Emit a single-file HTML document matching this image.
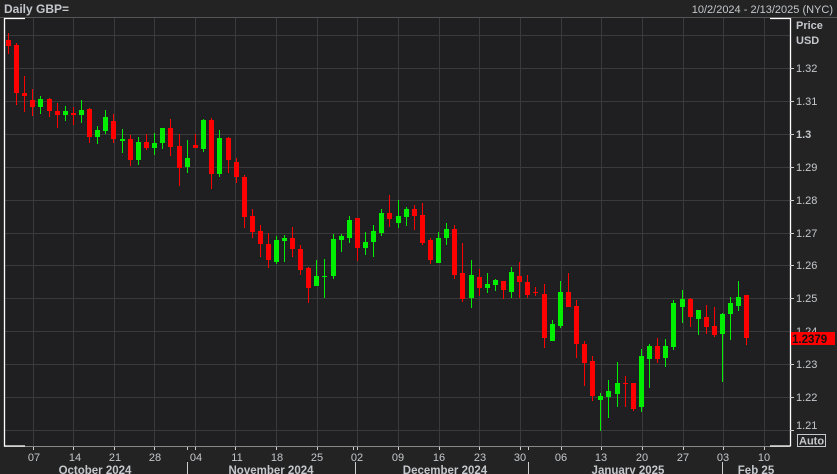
<!DOCTYPE html>
<html><head><meta charset="utf-8"><style>
html,body{margin:0;padding:0;background:#222222;width:837px;height:474px;overflow:hidden}
svg{display:block;font-family:"Liberation Sans",Tahoma,sans-serif}
</style></head><body>
<svg width="837" height="474" viewBox="0 0 837 474" xmlns="http://www.w3.org/2000/svg">
<rect x="0" y="0" width="837" height="474" fill="#232323"/>
<rect x="4" y="18" width="786" height="428" fill="#1f1f21"/>
<line x1="0" y1="17.5" x2="837" y2="17.5" stroke="#555" stroke-width="1"/>
<text x="4" y="13" font-size="12" font-weight="bold" fill="#c4c8cc">Daily GBP=</text>
<text x="833" y="13" font-size="11" fill="#c4c8cc" text-anchor="end">10/2/2024 - 2/13/2025 (NYC)</text>
<g stroke="#3a3a3a" stroke-width="1">
<path d="M5 35.5H790M5 68.5H790M5 101.5H790M5 134.5H790M5 167.5H790M5 200.5H790M5 233.5H790M5 265.5H790M5 298.5H790M5 331.5H790M5 364.5H790M5 397.5H790M5 430.5H790"/>
<path d="M33.5 18V446M73.5 18V446M114.5 18V446M154.5 18V446M195.5 18V446M235.5 18V446M276.5 18V446M317.5 18V446M357.5 18V446M398.5 18V446M439.5 18V446M479.5 18V446M520.5 18V446M561.5 18V446M601.5 18V446M642.5 18V446M683.5 18V446M723.5 18V446M764.5 18V446"/>
</g>
<line x1="4" y1="446.5" x2="790" y2="446.5" stroke="#888"/>
<g stroke="#fff" stroke-width="1.3" fill="none">
<path d="M4.5 18V446.5M4 18.5H25M4 446H25M790.5 18V446.5M770 18.5H790M770 446H790"/>
</g>
<g stroke="#ff0000" stroke-width="1" fill="none">
<path d="M8.5 33V54M16.5 43V105M24.5 76V112M32.5 89V116M49.5 98V117M57.5 103V128M73.5 107V125M89.5 108V143M113.5 114V143M130.5 135V166M146.5 134V150M170.5 119V156M179.5 134V186M195.5 134V148M211.5 118V189M228.5 137V173M236.5 158V183M244.5 175V228M252.5 209V238M260.5 225V257M268.5 233V268M292.5 227V257M300.5 245V275M308.5 267V303M357.5 218V261M389.5 195V227M414.5 205V230M422.5 203V245M430.5 238V264M454.5 225V279M462.5 243V302M479.5 269V296M503.5 281V299M519.5 262V298M527.5 275V298M535.5 287V296M544.5 284V348M568.5 273V307M576.5 300V358M584.5 341V386M592.5 356V401M625.5 376V407M633.5 383V411M657.5 338V363M690.5 298V327M706.5 305V334M714.5 307V337M746.5 295V345"/>
</g>
<g fill="#ff0000">
<path d="M6 40h5v6h-5zM14 45h5v48h-5zM22 93h5v3h-5zM30 100h5v7h-5zM47 99h5v12h-5zM55 111h5v4h-5zM71 113h5v2h-5zM87 109h5v28h-5zM111 121h5v18h-5zM128 139h5v21h-5zM144 142h5v6h-5zM168 128h5v19h-5zM177 146h5v22h-5zM193 145h5v3h-5zM209 120h5v54h-5zM226 138h5v22h-5zM234 162h5v15h-5zM242 177h5v40h-5zM250 216h5v16h-5zM258 231h5v13h-5zM266 244h5v16h-5zM290 238h5v11h-5zM298 249h5v21h-5zM306 268h5v20h-5zM355 218h5v30h-5zM387 213h5v6h-5zM412 209h5v7h-5zM420 215h5v28h-5zM428 240h5v20h-5zM452 229h5v46h-5zM460 273h5v26h-5zM477 277h5v11h-5zM501 281h5v9h-5zM517 276h5v6h-5zM525 282h5v13h-5zM533 292h5v1h-5zM542 294h5v44h-5zM566 292h5v15h-5zM574 306h5v38h-5zM582 344h5v19h-5zM590 361h5v35h-5zM623 383h5v1h-5zM631 383h5v26h-5zM655 346h5v13h-5zM688 299h5v18h-5zM704 317h5v10h-5zM712 326h5v9h-5zM744 295h5v43h-5z"/>
</g>
<g stroke="#00ee00" stroke-width="1" fill="none">
<path d="M40.5 96V114M65.5 106V121M81.5 100V123M97.5 126V144M105.5 110V134M122.5 129V153M138.5 137V165M154.5 133V155M162.5 128V149M187.5 140V173M203.5 119V152M219.5 130V177M276.5 236V264M284.5 235V262M316.5 260V286M324.5 259V298M333.5 234V279M341.5 234V252M349.5 216V243M365.5 232V255M373.5 225V257M381.5 209V236M398.5 200V228M406.5 207V226M438.5 232V263M446.5 223V245M471.5 260V308M487.5 273V293M495.5 279V291M511.5 267V298M552.5 320V341M560.5 281V328M600.5 393V431M608.5 380V418M617.5 362V407M641.5 349V412M649.5 344V388M665.5 339V367M673.5 300V350M682.5 290V323M698.5 310V335M722.5 313V382M730.5 297V340M738.5 281V311"/>
</g>
<g fill="#00ee00">
<path d="M38 99h5v8h-5zM63 111h5v4h-5zM79 110h5v5h-5zM95 130h5v7h-5zM103 117h5v14h-5zM120 139h5v2h-5zM136 142h5v18h-5zM152 143h5v5h-5zM160 128h5v15h-5zM185 158h5v9h-5zM201 120h5v29h-5zM217 138h5v36h-5zM274 240h5v22h-5zM282 238h5v3h-5zM314 276h5v10h-5zM322 276h5v1h-5zM331 239h5v37h-5zM339 236h5v4h-5zM347 220h5v18h-5zM363 242h5v6h-5zM371 231h5v11h-5zM379 213h5v20h-5zM396 216h5v7h-5zM404 209h5v8h-5zM436 238h5v25h-5zM444 229h5v9h-5zM469 275h5v23h-5zM485 284h5v4h-5zM493 280h5v5h-5zM509 272h5v20h-5zM550 324h5v17h-5zM558 292h5v34h-5zM598 396h5v4h-5zM606 391h5v6h-5zM615 383h5v11h-5zM639 356h5v51h-5zM647 346h5v13h-5zM663 346h5v12h-5zM671 303h5v44h-5zM680 299h5v8h-5zM696 310h5v9h-5zM720 314h5v20h-5zM728 303h5v11h-5zM736 297h5v9h-5z"/>
</g>
<g font-size="11" fill="#c4c8cc">
<text x="796" y="29" font-weight="bold" font-size="11">Price</text>
<text x="796" y="44" font-weight="bold" font-size="11">USD</text>
</g>
<g stroke="#ccc" stroke-width="1"><path d="M790 68.5h4M790 101.5h4M790 134.5h4M790 167.5h4M790 200.5h4M790 233.5h4M790 265.5h4M790 298.5h4M790 364.5h4M790 397.5h4M790 430.5h4"/></g>
<g font-size="11" fill="#c4c8cc">
<text x="796" y="72">1.32</text>
<text x="796" y="105">1.31</text>
<text x="796" y="138" font-weight="bold">1.3</text>
<text x="796" y="171">1.29</text>
<text x="796" y="204">1.28</text>
<text x="796" y="237">1.27</text>
<text x="796" y="269">1.26</text>
<text x="796" y="302">1.25</text>
<text x="796" y="335">1.24</text>
<text x="796" y="368">1.23</text>
<text x="796" y="401">1.22</text>
<text x="796" y="429">1.21</text>
</g>
<rect x="791" y="332" width="44" height="13" fill="#ff0000"/>
<text x="792" y="343" font-size="11.5" font-weight="bold" fill="#111">1.2379</text>
<rect x="797.5" y="434.5" width="28" height="12" fill="none" stroke="#c4c8cc"/>
<text x="799" y="444.5" font-size="11" font-weight="bold" fill="#c4c8cc">Auto</text>
<g stroke="#ccc"><path d="M33.5 447v3M73.5 447v3M114.5 447v3M154.5 447v3M195.5 447v3M235.5 447v3M276.5 447v3M317.5 447v3M357.5 447v3M398.5 447v3M439.5 447v3M479.5 447v3M520.5 447v3M561.5 447v3M601.5 447v3M642.5 447v3M683.5 447v3M723.5 447v3M764.5 447v3M187.5 447v3M353.5 447v3M528.5 447v3"/>
<path d="M187.5 462v12M355.5 462v12M528.5 462v12M722.5 462v12"/></g>
<g font-size="11" fill="#c4c8cc" text-anchor="middle">
<text x="34" y="461">07</text><text x="75" y="461">14</text><text x="115" y="461">21</text><text x="155" y="461">28</text>
<text x="196" y="461">04</text><text x="237" y="461">11</text><text x="277" y="461">18</text><text x="317" y="461">25</text>
<text x="357" y="461">02</text><text x="398" y="461">09</text><text x="439" y="461">16</text><text x="480" y="461">23</text>
<text x="520" y="461">30</text><text x="561" y="461">06</text><text x="601" y="461">13</text><text x="642" y="461">20</text>
<text x="683" y="461">27</text><text x="723" y="461">03</text><text x="764" y="461">10</text>
</g>
<g font-size="11.5" font-weight="bold" fill="#c4c8cc" text-anchor="middle">
<text x="95" y="474">October 2024</text>
<text x="271" y="474">November 2024</text>
<text x="445" y="474">December 2024</text>
<text x="628" y="474">January 2025</text>
<text x="756" y="474">Feb 25</text>
</g>
</svg>
</body></html>
